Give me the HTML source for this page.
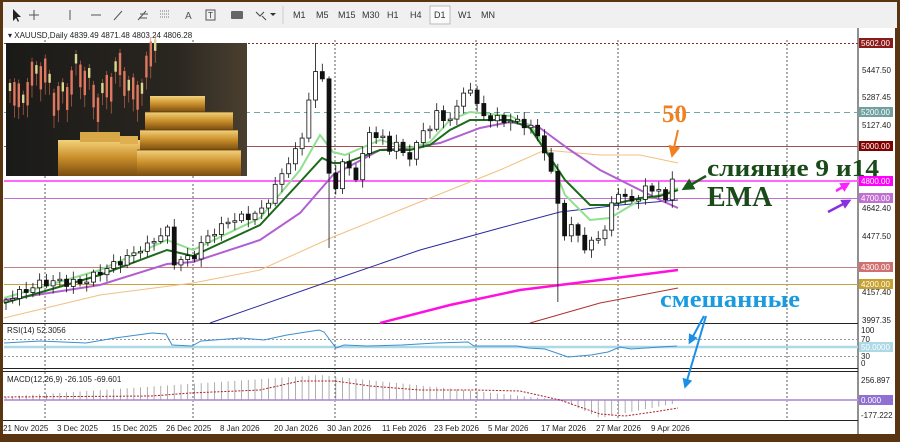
<!DOCTYPE html>
<html><head><meta charset="utf-8"><style>
html,body{margin:0;padding:0;width:900px;height:442px;overflow:hidden;background:#5a3512}
svg{display:block}
.s{font-family:"Liberation Sans",sans-serif}
.r{font-family:"Liberation Serif",serif;font-weight:bold}
</style></head><body>
<svg id="s" width="900" height="442" viewBox="0 0 900 442" xmlns="http://www.w3.org/2000/svg">
<defs>
<linearGradient id="gold" x1="0" y1="0" x2="0" y2="1"><stop offset="0" stop-color="#f3d27a"/><stop offset="0.5" stop-color="#c88d2a"/><stop offset="1" stop-color="#7a4d10"/></linearGradient>
<linearGradient id="bg" x1="0" y1="0" x2="1" y2="0"><stop offset="0" stop-color="#1a1a18"/><stop offset="0.7" stop-color="#2a2620"/><stop offset="1" stop-color="#4a4030"/></linearGradient>
<marker id="ao" markerWidth="6" markerHeight="6" refX="3" refY="3" orient="auto"><path d="M0,0L6,3L0,6z" fill="#f08020"/></marker>
<marker id="ag" markerWidth="5" markerHeight="5" refX="2.5" refY="2.5" orient="auto"><path d="M0,0L5,2.5L0,5z" fill="#1a5a1a"/></marker>
<marker id="ab" markerWidth="5" markerHeight="5" refX="2.5" refY="2.5" orient="auto"><path d="M0,0L5,2.5L0,5z" fill="#1a8fe8"/></marker>
<marker id="am" markerWidth="4" markerHeight="4" refX="2" refY="2" orient="auto"><path d="M0,0L4,2L0,4z" fill="#ff20ff"/></marker>
<marker id="ap" markerWidth="4" markerHeight="4" refX="2" refY="2" orient="auto"><path d="M0,0L4,2L0,4z" fill="#8a30e0"/></marker>
</defs>
<g class="s">
<rect x="0" y="0" width="900" height="28" fill="#5a3512"/>
<rect x="3" y="2" width="894" height="26" fill="#f0f0f0"/>
<g fill="#333" font-size="9">
<path d="M13,9 L13,21 L16,18 L18,22 L19,21 L17,17 L21,17 Z" fill="#222"/>
<path d="M34,10v10M29,15h10" stroke="#555" fill="none"/>
<path d="M70,10v10" stroke="#555"/>
<path d="M91,15h10" stroke="#555"/>
<path d="M114,20l8,-9" stroke="#555"/>
<path d="M138,20l8,-9M140,14h8M139,18h8" stroke="#555"/>
<path d="M160,11h10M160,14h10M160,17h10" stroke="#777" stroke-dasharray="1,1"/>
<text x="185" y="19" font-size="10" fill="#555">A</text>
<rect x="206" y="10" width="9" height="10" fill="none" stroke="#555"/><text x="208" y="18" font-size="8">T</text>
<rect x="231" y="11" width="12" height="8" fill="#666" rx="1"/>
<path d="M256,12l4,4l4,-4M262,16l4,4" stroke="#444" fill="none"/><path d="M270,13l3,3l3,-3z" fill="#333"/>
<path d="M283,6v18" stroke="#ccc"/>
<text x="293" y="18">M1</text><text x="316" y="18">M5</text><text x="338" y="18">M15</text><text x="362" y="18">M30</text><text x="387" y="18">H1</text><text x="410" y="18">H4</text>
<rect x="430" y="6" width="20" height="18" fill="#fafafa" stroke="#bbb"/>
<text x="434" y="18">D1</text><text x="458" y="18">W1</text><text x="481" y="18">MN</text>
</g>
<rect x="3" y="28" width="892" height="406" fill="#fff"/>
<rect x="0" y="434" width="900" height="8" fill="#5a3512"/>
<path d="M858,28V434" stroke="#222" stroke-width="1"/>
<path d="M3,323.5H858M3,368.5H858M3,371.5H858M3,420.5H858" stroke="#222" stroke-width="1"/>
<g stroke="#333" stroke-dasharray="2,2" stroke-width="0.8">
<path d="M45,40V420M193,40V420M335,40V420M476,40V420M618,40V420M787,40V420"/>
</g>
<text x="8" y="38" font-size="8" fill="#222">▾ XAUUSD,Daily  4839.49 4871.48 4803.24 4806.28</text>
<path d="M4,43.5H858" stroke="#8b2a2a" stroke-dasharray="2,2"/>
<path d="M4,112.5H858" stroke="#70a8a8" stroke-dasharray="6,4"/>
<path d="M4,146.5H858" stroke="#a05050"/>
<path d="M4,181H858" stroke="#ff66ff" stroke-width="2"/>
<path d="M4,198.5H858" stroke="#c070d0"/>
<path d="M4,267.5H858" stroke="#c08080"/>
<path d="M4,284.5H858" stroke="#c8a040"/>
<g id="ma" fill="none"></g>
<g id="cd"></g>
<rect x="6" y="43" width="241" height="133" fill="url(#bg)"/>
<g id="ph"></g>
<g>
<rect x="58" y="140" width="90" height="36" fill="url(#gold)"/>
<rect x="80" y="132" width="40" height="10" fill="#d8a848"/>
<rect x="120" y="136" width="18" height="8" fill="#e0b050"/>
<rect x="137" y="150" width="104" height="26" fill="url(#gold)"/>
<rect x="140" y="130" width="98" height="20" fill="url(#gold)"/>
<rect x="145" y="112" width="88" height="18" fill="url(#gold)"/>
<rect x="150" y="96" width="55" height="16" fill="url(#gold)"/>
<path d="M137,150h104M140,130h98M145,112h88" stroke="#5a3a10" stroke-width="0.8"/>
</g>
<g font-size="8" fill="#222">
<text x="862" y="73">5447.50</text><text x="862" y="100">5287.45</text><text x="862" y="128">5127.40</text>
<text x="862" y="211">4642.40</text><text x="862" y="239">4477.50</text><text x="862" y="295">4157.40</text><text x="862" y="323">3997.35</text>
</g>
<g font-size="8" fill="#fff">
<rect x="859" y="38" width="34" height="10" fill="#8b1a1a"/><text x="861" y="46">5602.00</text>
<rect x="859" y="107" width="34" height="10" fill="#70a0a0"/><text x="861" y="115">5200.00</text>
<rect x="859" y="141" width="34" height="10" fill="#800000"/><text x="861" y="149">5000.00</text>
<rect x="859" y="176" width="34" height="10" fill="#ff00ff"/><text x="861" y="184">4800.00</text>
<rect x="859" y="193" width="34" height="10" fill="#c070d0"/><text x="861" y="201">4700.00</text>
<rect x="859" y="262" width="34" height="10" fill="#d07070"/><text x="861" y="270">4300.00</text>
<rect x="859" y="279" width="34" height="10" fill="#c8a030"/><text x="861" y="287">4200.00</text>
</g>
<text x="7" y="333" font-size="8" fill="#222">RSI(14) 52.3056</text>
<path d="M4,339.5H858M4,356.5H858" stroke="#999" stroke-dasharray="2,2"/>
<path d="M4,347H858" stroke="#add8e6" stroke-width="2.5"/>
<polyline fill="none" stroke="#3a8fd0" stroke-width="1" points="4,343 40,341 86,343 115,338 152,333 166,334 172,345 192,346 201,341 241,338 264,340 287,335 319,330 324,332 336,348 344,345 367,346 402,345 436,343 468,342 474,346 517,346 528,348 545,349 568,357 591,355 608,352 620,347 631,349 660,347 677,346"/>
<g font-size="8" fill="#222"><text x="861" y="333">100</text><text x="861" y="342">70</text><text x="861" y="359">30</text><text x="861" y="366">0</text></g>
<rect x="859" y="342" width="34" height="10" fill="#add8e6"/><text x="861" y="350" font-size="8" fill="#fff">50.0000</text>
<text x="7" y="382" font-size="8" fill="#222">MACD(12,26,9) -26.105 -69.601</text>
<path d="M4,400H858" stroke="#c0a0e0" stroke-width="2"/>
<g id="hist" stroke="#999" stroke-width="0.8"></g>
<polyline fill="none" stroke="#b02020" stroke-width="1" stroke-dasharray="2,1.5" points="4,397 152,396 190,393 260,390 300,381 335,381 370,386 420,390 475,390 520,391 560,400 600,414 625,416 660,411 678,408"/>
<g font-size="8" fill="#222"><text x="861" y="383">256.897</text><text x="861" y="418">-177.222</text></g>
<rect x="859" y="395" width="34" height="10" fill="#9070d0"/><text x="861" y="403" font-size="8" fill="#fff">0.000</text>
<g font-size="8" fill="#222">
<text x="3" y="431">21 Nov 2025</text><text x="57" y="431">3 Dec 2025</text><text x="112" y="431">15 Dec 2025</text><text x="166" y="431">26 Dec 2025</text><text x="220" y="431">8 Jan 2026</text><text x="274" y="431">20 Jan 2026</text><text x="327" y="431">30 Jan 2026</text><text x="382" y="431">11 Feb 2026</text><text x="434" y="431">23 Feb 2026</text><text x="488" y="431">5 Mar 2026</text><text x="541" y="431">17 Mar 2026</text><text x="596" y="431">27 Mar 2026</text><text x="651" y="431">9 Apr 2026</text>
</g>
</g>
<text class="r" x="662" y="122" font-size="25" fill="#f08020">50</text>
<path d="M678,130L673,152" stroke="#f08020" stroke-width="2" marker-end="url(#ao)"/>
<text class="r" x="707" y="176" font-size="24" fill="#1a4a1a" textLength="172" lengthAdjust="spacingAndGlyphs">слияние 9 и14</text>
<text class="r" x="707" y="206" font-size="28" fill="#1a4a1a">EMA</text>
<path d="M706,176L687,187" stroke="#1a5a1a" stroke-width="2.5" marker-end="url(#ag)"/>
<path d="M836,191L846,185" stroke="#ff20ff" stroke-width="2.5" marker-end="url(#am)"/>
<path d="M828,212L847,202" stroke="#8a30e0" stroke-width="2.5" marker-end="url(#ap)"/>
<text class="r" x="660" y="307" font-size="24" fill="#1a9be0" textLength="140" lengthAdjust="spacingAndGlyphs">смешанные</text>
<path d="M704,316L691,340" stroke="#1a8fe8" stroke-width="2" marker-end="url(#ab)"/>
<path d="M706,316L686,384" stroke="#1a8fe8" stroke-width="2" marker-end="url(#ab)"/>
</svg>
<script>
var NS="http://www.w3.org/2000/svg";
function el(p,t,a){var e=document.createElementNS(NS,t);for(var k in a)e.setAttribute(k,a[k]);p.appendChild(e);return e;}
var A=[[6,300],[43,282],[83,283],[100,272],[147,247],[167,228],[173,262],[193,257],[207,237],[233,220],[260,213],[273,192],[287,163],[300,147],[313,77],[322,70],[328,167],[333,205],[342,157],[355,183],[362,153],[368,137],[382,133],[388,160],[395,135],[408,167],[415,140],[430,130],[437,108],[443,125],[455,110],[470,85],[480,115],[500,120],[530,125],[545,150],[555,190],[565,235],[575,225],[585,250],[595,240],[605,232],[612,203],[618,190],[625,200],[632,200],[638,198],[645,190],[652,188],[658,188],[665,205],[672,175],[679,178]];
function f(x){for(var i=0;i<A.length-1;i++){if(x<=A[i+1][0]){var t=(x-A[i][0])/(A[i+1][0]-A[i][0]);return A[i][1]+t*(A[i+1][1]-A[i][1]);}}return A[A.length-1][1];}
var cd=document.getElementById('cd'),h=document.getElementById('hist');
var prev=302;
for(var i=0;i<100;i++){var x=6+i*6.73;var c=f(x)+Math.sin(i*2.3)*4;var o=prev;if(Math.abs(c-o)<1.5)c=o-1.5;
var tp=Math.min(o,c)-2-Math.abs(Math.sin(i*1.7))*6,bt=Math.max(o,c)+2+Math.abs(Math.cos(i*1.3))*6;
if(i==46){tp=43;} if(i==82){bt=302;} if(i==48){bt=248;}
el(cd,'line',{x1:x,y1:tp,x2:x,y2:bt,stroke:'#111','stroke-width':0.8});
el(cd,'rect',{x:x-2,y:Math.min(o,c),width:4,height:Math.abs(c-o),fill:c<o?'#fff':'#111',stroke:'#111','stroke-width':0.8});
prev=c;
var v;if(x<320)v=3+(x/320)*22;else if(x<560)v=25*(560-x)/240;else if(x<600)v=-18*(x-560)/40;else v=-18+15*(x-600)/78;
el(h,'line',{x1:x,y1:400,x2:x,y2:400-v});}
var ma=document.getElementById('ma');
var L=[
['#f0c080',1,"4,318 100,295 193,283 260,270 333,237 400,210 450,190 500,170 545,150 600,155 640,155 678,163"],
['#2a2aa0',1,"210,323 333,280 420,250 500,228 560,212 620,205 678,200"],
['#ff10e0',2.5,"380,323 450,305 520,290 600,280 678,270"],
['#b03030',1,"530,323 600,303 678,288"],
['#b060d0',2,"4,300 100,285 167,264 193,262 260,240 300,213 320,190 333,175 380,150 410,148 440,143 480,128 510,122 540,128 570,150 600,170 630,185 660,200 678,208"],
['#90e090',2,"4,298 100,270 167,240 193,250 260,218 300,170 320,135 333,152 345,155 380,140 410,148 430,142 450,120 470,112 510,116 530,125 545,145 565,195 590,220 610,218 640,200 660,195 678,188"],
['#1a6a1a',2,"4,303 100,275 167,250 193,256 260,225 300,182 322,158 333,163 345,163 380,150 410,150 430,145 450,130 470,120 510,120 530,128 545,150 565,180 590,205 610,205 640,198 660,196 678,190"]];
L.forEach(function(l){el(ma,'polyline',{points:l[2],stroke:l[0],'stroke-width':l[1],fill:'none'});});
var ph=document.getElementById('ph');
for(var j=0;j<34;j++){var x=10+j*4.4;var y=75+Math.sin(j*0.7)*15+Math.cos(j*1.9)*8-(j>28?(j-28)*6:0);var hh=8+Math.abs(Math.sin(j*2.1))*18;
el(ph,'line',{x1:x,y1:y-4,x2:x,y2:y+hh+12,stroke:'#d87058','stroke-width':0.6});
el(ph,'rect',{x:x-1.2,y:y,width:2.4,height:hh,fill:j%3==0?'#d8d890':'#e07860'});}
</script>
</body></html>
